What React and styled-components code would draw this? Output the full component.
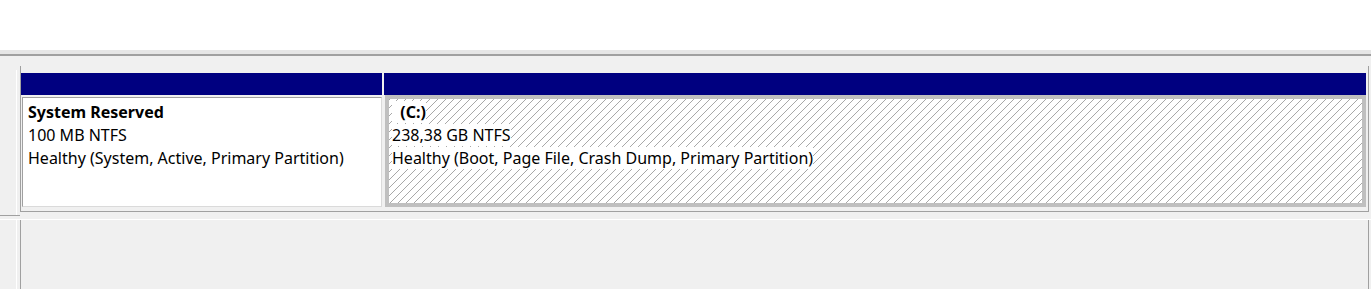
import React from 'react';
import styled, { createGlobalStyle } from 'styled-components';

const Global = createGlobalStyle`
  html, body { margin: 0; padding: 0; background: #f0f0f0; }
  body { font-family: "Noto Sans", "Open Sans", sans-serif; overflow: hidden; }
`;

const Page = styled.div`
  width: 1371px;
  height: 289px;
  overflow: hidden;
  background: #f0f0f0;
  display: flex;
  flex-direction: column;
`;

const TopPane = styled.div`
  height: 50px;
  background: #fff;
  flex-shrink: 0;
`;

const Splitter = styled.div`
  height: 4px;
  background: #e6e6e6;
  border-bottom: 2px solid #a0a0a0;
  flex-shrink: 0;
`;

const DiskList = styled.div`
  display: flex;
  flex-direction: column;
  padding-top: 10px;
`;

const DiskRow = styled.div`
  display: flex;
  flex-shrink: 0;
  height: ${p => p.$h}px;
  box-sizing: border-box;
  ${p => p.$next && 'margin-top: 3px; border-top: 1px solid #fff;'}
`;

const DiskLabel = styled.div`
  width: 20px;
  flex-shrink: 0;
  box-sizing: border-box;
  border-bottom: ${p => (p.$last ? 'none' : '1px solid #a0a0a0')};
  padding-top: ${p => (p.$last ? 0 : 4)}px;
  display: flex;
`;

const LabelFace = styled.div`
  width: 16px;
  box-sizing: content-box;
  border-right: 1px solid #fff;
`;

const PartitionArea = styled.div`
  flex: 1;
  margin-right: 2px;
  height: ${p => p.$h}px;
  box-sizing: border-box;
  border-left: 1px solid #a0a0a0;
  border-right: 1px solid #a0a0a0;
  border-bottom: ${p => (p.$last ? 'none' : '1px solid #a0a0a0')};
  padding: 7px 2px 0 0;
  display: flex;
  gap: 2px;
  align-items: flex-start;
`;

const Partition = styled.div`
  display: flex;
  flex-direction: column;
  width: ${p => (p.$w ? `${p.$w}px` : 'auto')};
  flex: ${p => (p.$w ? '0 0 auto' : '1')};
`;

const Header = styled.div`
  height: 22px;
  background: #000080;
`;

const PlainBody = styled.div`
  padding: 2px 0 0 1px;
`;

const PlainBox = styled.div`
  height: 110px;
  box-sizing: border-box;
  background: #fff;
  border-top: 1px solid #a0a0a0;
  border-left: 1px solid #a0a0a0;
  border-right: 1px solid #dadada;
  border-bottom: 1px solid #dadada;
  padding: 3px 0 0 5px;
`;

const SelectedFrame = styled.div`
  margin-left: 1px;
  height: 112px;
  box-sizing: border-box;
  border: 4px solid #bfbfbf;
  padding: 2px 3px 0;
  background-color: #fff;
  background-image: repeating-linear-gradient(
    135deg,
    #a8a8a8 0px,
    #a8a8a8 0.9px,
    transparent 0.9px,
    transparent 5.657px
  );
`;

const Line = styled.div`
  font-size: 16px;
  line-height: 23px;
  color: #000;
  white-space: pre;
  font-weight: ${p => (p.$bold ? 700 : 400)};
`;

const Opaque = styled.span`
  background: #fff;
`;

const partitions = [
  {
    id: 'sys',
    width: 361,
    title: 'System Reserved',
    size: '100 MB NTFS',
    status: 'Healthy (System, Active, Primary Partition)',
    selected: false,
  },
  {
    id: 'c',
    title: '  (C:)',
    size: '238,38 GB NTFS',
    status: 'Healthy (Boot, Page File, Crash Dump, Primary Partition)',
    selected: true,
  },
];

function PartitionText({ p, opaque }) {
  const W = opaque ? Opaque : React.Fragment;
  return (
    <>
      <Line $bold><W>{p.title}</W></Line>
      <Line><W>{p.size}</W></Line>
      <Line><W>{p.status}</W></Line>
    </>
  );
}

export default function App() {
  return (
    <Page>
      <Global />
      <TopPane />
      <Splitter />
      <DiskList>
        <DiskRow $h={150}>
          <DiskLabel>
            <LabelFace />
          </DiskLabel>
          <PartitionArea $h={146}>
            {partitions.map(p => (
              <Partition key={p.id} $w={p.width}>
                <Header />
                {p.selected ? (
                  <SelectedFrame>
                    <PartitionText p={p} opaque />
                  </SelectedFrame>
                ) : (
                  <PlainBody>
                    <PlainBox>
                      <PartitionText p={p} />
                    </PlainBox>
                  </PlainBody>
                )}
              </Partition>
            ))}
          </PartitionArea>
        </DiskRow>
        <DiskRow $h={100} $next>
          <DiskLabel $last>
            <LabelFace />
          </DiskLabel>
          <PartitionArea $h={100} $last />
        </DiskRow>
      </DiskList>
    </Page>
  );
}
